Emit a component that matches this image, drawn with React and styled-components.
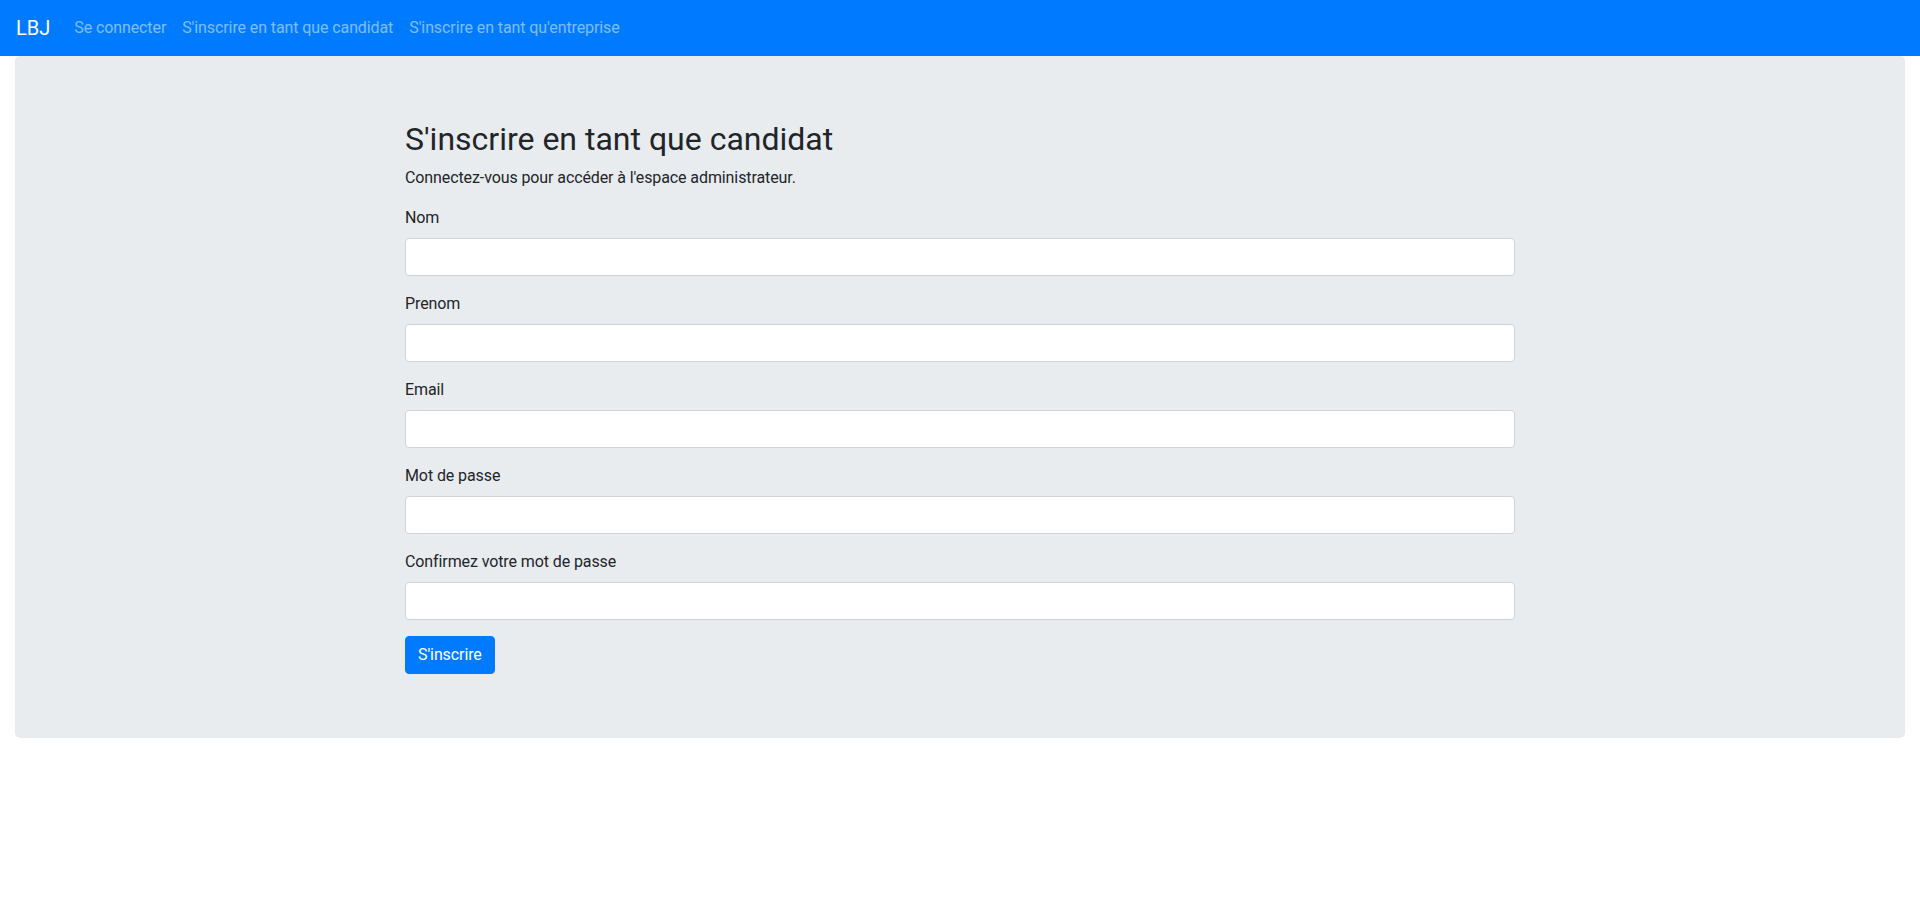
import React from "react";
import styled, { createGlobalStyle } from "styled-components";

const GlobalStyle = createGlobalStyle`
  *, *::before, *::after { box-sizing: border-box; }
  body {
    margin: 0;
    font-family: Roboto, "Liberation Sans", Arial, sans-serif;
    font-size: 16px;
    line-height: 1.5;
    letter-spacing: -0.1px;
    color: #212529;
    background: #fff;
  }
`;

const Navbar = styled.nav`
  display: flex;
  align-items: center;
  padding: 8px 16px;
  background: #007bff;
`;

const Brand = styled.a`
  display: inline-block;
  padding: 5px 0;
  margin-right: 16px;
  font-size: 20px;
  line-height: 30px;
  letter-spacing: 0;
  color: #fff;
  text-decoration: none;
  white-space: nowrap;
`;

const NavList = styled.ul`
  display: flex;
  list-style: none;
  margin: 0;
  padding: 0;
`;

const NavLink = styled.a`
  display: block;
  padding: 8px;
  color: rgba(255, 255, 255, 0.5);
  text-decoration: none;
`;

const Jumbotron = styled.div`
  margin: 0 15px 32px;
  padding: 64px 32px;
  background: #e9ecef;
  border-radius: 4.8px;
`;

const Container = styled.div`
  max-width: 1140px;
  margin: 0 auto;
  padding: 0 15px;
`;

const Title = styled.h1`
  margin: 0 0 8px;
  font-size: 32px;
  font-weight: 400;
  line-height: 1.2;
  letter-spacing: 0;
`;

const Lead = styled.p`
  margin: 0 0 16px;
`;

const FormGroup = styled.div`
  margin-bottom: 16px;
`;

const Label = styled.label`
  display: inline-block;
  margin-bottom: 8px;
`;

const Input = styled.input`
  display: block;
  width: 100%;
  height: 38px;
  padding: 6px 12px;
  font: inherit;
  color: #495057;
  background: #fff;
  border: 1px solid #ced4da;
  border-radius: 4px;
`;

const Button = styled.button`
  display: inline-block;
  padding: 6px 12px;
  font: inherit;
  line-height: 1.5;
  letter-spacing: inherit;
  color: #fff;
  background: #007bff;
  border: 1px solid #007bff;
  border-radius: 4px;
  cursor: pointer;
`;

const fields = [
  { label: "Nom", type: "text" },
  { label: "Prenom", type: "text" },
  { label: "Email", type: "email" },
  { label: "Mot de passe", type: "password" },
  { label: "Confirmez votre mot de passe", type: "password" },
];

export default function App() {
  return (
    <>
      <GlobalStyle />
      <Navbar>
        <Brand href="#">LBJ</Brand>
        <NavList>
          <li><NavLink href="#">Se connecter</NavLink></li>
          <li><NavLink href="#">S'inscrire en tant que candidat</NavLink></li>
          <li><NavLink href="#">S'inscrire en tant qu'entreprise</NavLink></li>
        </NavList>
      </Navbar>
      <Jumbotron>
        <Container>
          <Title>S'inscrire en tant que candidat</Title>
          <Lead>Connectez-vous pour accéder à l'espace administrateur.</Lead>
          <form onSubmit={(e) => e.preventDefault()}>
            {fields.map((f, i) => (
              <FormGroup key={i}>
                <Label htmlFor={`f${i}`}>{f.label}</Label>
                <Input id={`f${i}`} type={f.type} />
              </FormGroup>
            ))}
            <Button type="submit">S'inscrire</Button>
          </form>
        </Container>
      </Jumbotron>
    </>
  );
}
